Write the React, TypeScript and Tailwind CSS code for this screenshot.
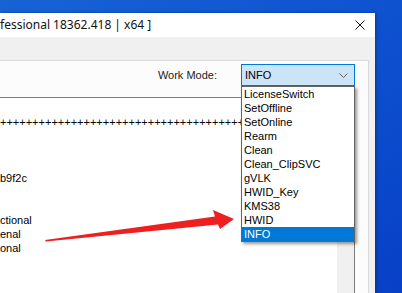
// Windows-style activation tool window: work mode combobox with its list open.
const MODES = [
  'LicenseSwitch',
  'SetOffline',
  'SetOnline',
  'Rearm',
  'Clean',
  'Clean_ClipSVC',
  'gVLK',
  'HWID_Key',
  'KMS38',
  'HWID',
  'INFO',
];

const LINES = ['', '+'.repeat(38), '', '', '', 'b9f2c', '', '', 'ctional', 'enal', 'onal', '', ''];

export default function App() {
  const selected = 'INFO';

  return (
    <div className="relative h-[293px] w-[402px] overflow-hidden bg-gradient-to-br from-[#1862d6] via-[#0e52d0] to-[#0840c6] pt-[13px] font-['Liberation_Sans',Arial,sans-serif] text-[11px] text-black">
      <div className="flex h-[280px] w-[375px] flex-col bg-[#f0f0f0] shadow-[1px_0_3px_rgba(0,0,0,0.35)]">
        {/* Title bar */}
        <div className="flex h-[24px] shrink-0 items-center justify-between bg-white pr-[10px] font-['Noto_Sans',sans-serif] text-[12px] text-[#111]">
          <span className="whitespace-nowrap">fessional 18362.418 | x64 ]</span>
          <svg width="10" height="10" viewBox="0 0 10 10" className="text-[#111]">
            <path d="M0.5 0.5 L9.5 9.5 M9.5 0.5 L0.5 9.5" stroke="currentColor" strokeWidth="1" />
          </svg>
        </div>

        {/* Toolbar band */}
        <div className="h-[23px] shrink-0" />

        {/* Panel */}
        <div className="mr-[6px] flex flex-1 flex-col border-t border-r border-[#dadada] bg-[#fcfcfc] pt-[3px] pr-[13px]">
          <div className="flex h-[22px] shrink-0 items-center justify-end gap-[24px]">
            <span className="text-[#222]">Work Mode:</span>
            <div className="flex h-[22px] w-[114px] items-center justify-between border border-[#0078d7] bg-[#cce4f7] pr-[6px] pl-[3px]">
              <span>{selected}</span>
              <svg width="9" height="5" viewBox="0 0 9 5">
                <path d="M0.5 0.5 L4.5 4.5 L8.5 0.5" fill="none" stroke="#606060" strokeWidth="1" />
              </svg>
            </div>
          </div>

          {/* Output box */}
          <div className="mt-[11px] flex flex-1 border-t border-r border-[#7a7a7a] bg-white">
            <div className="flex-1 overflow-hidden pt-[3px] leading-[14px]">
              {LINES.map((line, i) => (
                <div key={i} className="h-[14px] w-[241px] overflow-hidden whitespace-nowrap">
                  {line}
                </div>
              ))}
            </div>
            <div className="w-[17px] shrink-0 bg-[#f0f0f0]" />
          </div>
        </div>
      </div>

      {/* Open dropdown list */}
      <div className="absolute top-[86px] left-[241px] w-[114px] border border-[#646464] bg-white shadow-[2px_2px_3px_rgba(0,0,0,0.4)]">
        {MODES.map((mode) => (
          <div
            key={mode}
            className={`flex h-[14px] items-center pl-[2px] ${
              mode === selected ? 'bg-[#0078d7] text-white' : ''
            }`}
          >
            {mode}
          </div>
        ))}
      </div>

      {/* Red annotation arrow */}
      <svg className="pointer-events-none absolute inset-0" width="402" height="293" viewBox="0 0 402 293">
        <polygon
          points="45,240 215,216.5 213,210 234,219 220,229 218,224.5 46,241.5"
          fill="#ee1f1f"
        />
      </svg>
    </div>
  );
}
